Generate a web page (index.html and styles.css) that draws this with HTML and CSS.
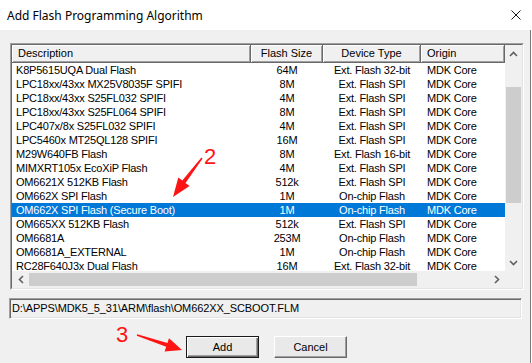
FILE: index.html
```html
<html>
<head>
<title>Add Flash Programming Algorithm</title>
<link rel="stylesheet" href="styles.css">
</head>
<body>
<div class="titlebar">
    <span class="title">Add Flash Programming Algorithm</span>
    <svg class="close" width="10" height="10" viewBox="0 0 10 10">
        <path d="M0.5 0.5 L9.5 9.5 M9.5 0.5 L0.5 9.5" stroke="#1a1a1a" stroke-width="1" fill="none"/>
    </svg>
</div>
<div class="client">
    <div class="listbox">
        <div class="listbox-inner">
            <div class="list">
                <div class="row head">
                    <div class="c1">Description</div>
                    <div class="c2">Flash Size</div>
                    <div class="c3">Device Type</div>
                    <div class="c4">Origin</div>
                </div>
                <div class="row"><div class="c1">K8P5615UQA Dual Flash</div><div class="c2">64M</div><div class="c3">Ext. Flash 32-bit</div><div class="c4">MDK Core</div></div>
                <div class="row"><div class="c1">LPC18xx/43xx MX25V8035F SPIFI</div><div class="c2">8M</div><div class="c3">Ext. Flash SPI</div><div class="c4">MDK Core</div></div>
                <div class="row"><div class="c1">LPC18xx/43xx S25FL032 SPIFI</div><div class="c2">4M</div><div class="c3">Ext. Flash SPI</div><div class="c4">MDK Core</div></div>
                <div class="row"><div class="c1">LPC18xx/43xx S25FL064 SPIFI</div><div class="c2">8M</div><div class="c3">Ext. Flash SPI</div><div class="c4">MDK Core</div></div>
                <div class="row"><div class="c1">LPC407x/8x S25FL032 SPIFI</div><div class="c2">4M</div><div class="c3">Ext. Flash SPI</div><div class="c4">MDK Core</div></div>
                <div class="row"><div class="c1">LPC5460x MT25QL128 SPIFI</div><div class="c2">16M</div><div class="c3">Ext. Flash SPI</div><div class="c4">MDK Core</div></div>
                <div class="row"><div class="c1">M29W640FB Flash</div><div class="c2">8M</div><div class="c3">Ext. Flash 16-bit</div><div class="c4">MDK Core</div></div>
                <div class="row"><div class="c1">MIMXRT105x EcoXiP Flash</div><div class="c2">4M</div><div class="c3">Ext. Flash SPI</div><div class="c4">MDK Core</div></div>
                <div class="row"><div class="c1">OM6621X 512KB Flash</div><div class="c2">512k</div><div class="c3">Ext. Flash SPI</div><div class="c4">MDK Core</div></div>
                <div class="row"><div class="c1">OM662X SPI Flash</div><div class="c2">1M</div><div class="c3">On-chip Flash</div><div class="c4">MDK Core</div></div>
                <div class="row sel"><div class="c1">OM662X SPI Flash (Secure Boot)</div><div class="c2">1M</div><div class="c3">On-chip Flash</div><div class="c4">MDK Core</div></div>
                <div class="row"><div class="c1">OM665XX 512KB Flash</div><div class="c2">512k</div><div class="c3">Ext. Flash SPI</div><div class="c4">MDK Core</div></div>
                <div class="row"><div class="c1">OM6681A</div><div class="c2">253M</div><div class="c3">On-chip Flash</div><div class="c4">MDK Core</div></div>
                <div class="row"><div class="c1">OM6681A_EXTERNAL</div><div class="c2">1M</div><div class="c3">On-chip Flash</div><div class="c4">MDK Core</div></div>
                <div class="row"><div class="c1">RC28F640J3x Dual Flash</div><div class="c2">16M</div><div class="c3">Ext. Flash 32-bit</div><div class="c4">MDK Core</div></div>
            </div>
            <div class="vscroll">
                <div class="sbtn"><svg width="9" height="6" viewBox="0 0 9 6"><path d="M1 5 L4.5 1.5 L8 5" stroke="#606060" stroke-width="1.6" fill="none"/></svg></div>
                <div class="vtrack"><div class="vthumb"></div></div>
                <div class="sbtn"><svg width="9" height="6" viewBox="0 0 9 6"><path d="M1 1 L4.5 4.5 L8 1" stroke="#606060" stroke-width="1.6" fill="none"/></svg></div>
            </div>
            <div class="hscroll">
                <div class="sbtn"><svg width="6" height="9" viewBox="0 0 6 9"><path d="M5 1 L1.5 4.5 L5 8" stroke="#606060" stroke-width="1.6" fill="none"/></svg></div>
                <div class="htrack"><div class="hthumb"></div></div>
                <div class="sbtn"><svg width="6" height="9" viewBox="0 0 6 9"><path d="M1 1 L4.5 4.5 L1 8" stroke="#606060" stroke-width="1.6" fill="none"/></svg></div>
            </div>
            <div class="corner"></div>
        </div>
    </div>
    <div class="pathbox">D:\APPS\MDK5_5_31\ARM\flash\OM662XX_SCBOOT.FLM</div>
    <div class="buttons">
        <div class="btn default">Add</div>
        <div class="btn">Cancel</div>
    </div>
</div>

<!-- red annotations drawn over the dialog -->
<span class="mark mark2">2</span>
<span class="mark mark3">3</span>
<svg class="arrows" width="532" height="363" viewBox="0 0 532 363">
    <polygon fill="#ff1414" points="202.6,158.4 201.4,157.6 182.3,180.5 178.3,177.5 173,197 189.5,185.9 185.5,182.9"/>
    <polygon fill="#ff1414" points="137.2,334.3 136.8,335.7 166.2,346.8 164.6,351.5 182,350 169,338.3 167.4,343"/>
</svg>
</body>
</html>
```

FILE: styles.css
```css
*
{
    margin: 0;
    padding: 0;
    box-sizing: border-box;
}
html, body
{
    width: 532px;
    height: 363px;
    overflow: hidden;
    background: #fff;
}
body
{
    position: relative;
    font-family: "Liberation Sans", Arial, sans-serif;
    font-size: 11px;
    color: #000;
}
.titlebar
{
    height: 30px;
    background: #fff;
    display: flex;
    align-items: center;
    padding-left: 7px;
}
.title
{
    font-family: "Noto Sans", "Open Sans", sans-serif;
    font-size: 12px;
    color: #000;
}
.close
{
    margin-left: auto;
    margin-right: 11px;
    margin-top: -1px;
}
.client
{
    width: 531px;
    height: 333px;
    background: #f0f0f0;
    border-right: 1px solid #7a7a7a;
    padding: 13px 0 0 9px;
    display: flex;
    flex-direction: column;
}
.listbox
{
    width: 514px;
    height: 247px;
    margin-left: 1px;
    border: 1px solid;
    border-color: #a0a0a0 #fff #fff #a0a0a0;
}
.listbox-inner
{
    height: 100%;
    border: 1px solid;
    border-color: #696969 #e3e3e3 #e3e3e3 #696969;
    display: grid;
    grid-template-columns: 493px 17px;
    grid-template-rows: 226px 17px;
    background: #fff;
}
.list
{
    overflow: hidden;
    background: #fff;
}
.row
{
    display: grid;
    grid-template-columns: 239px 72px 98px 84px;
    height: 14px;
    line-height: 14px;
    white-space: nowrap;
    letter-spacing: -0.2px;
}
.row div
{
    overflow: hidden;
}
.c1
{
    padding-left: 4px;
}
.c2, .c3
{
    text-align: center;
}
.c4
{
    padding-left: 6px;
}
.row.sel
{
    background: #0078d7;
    color: #fff;
}
.row.head
{
    height: 18px;
    line-height: 17px;
    letter-spacing: 0;
}
.row.head div
{
    background: #f0f0f0;
    border-right: 1px solid #696969;
    border-bottom: 1px solid #696969;
    box-shadow: inset 1px 1px #fff, inset -1px -1px #a0a0a0;
}
.row.head .c1
{
    padding-left: 6px;
}
.vscroll
{
    display: flex;
    flex-direction: column;
    background: #f0f0f0;
}
.sbtn
{
    width: 17px;
    height: 17px;
    flex: none;
    display: flex;
    align-items: center;
    justify-content: center;
}
.vtrack
{
    flex: 1;
    padding-top: 25px;
}
.vthumb
{
    width: 15px;
    height: 116px;
    margin-left: 1px;
    background: #cdcdcd;
}
.hscroll
{
    display: flex;
    background: #f0f0f0;
}
.htrack
{
    flex: 1;
    padding-top: 2px;
}
.hthumb
{
    width: 388px;
    height: 13px;
    background: #cdcdcd;
}
.corner
{
    background: #f0f0f0;
}
.pathbox
{
    width: 513px;
    height: 21px;
    margin-top: 8px;
    border: 1px solid;
    border-color: #a0a0a0 #fff #fff #a0a0a0;
    box-shadow: inset 1px 1px #696969, inset -1px -1px #e3e3e3;
    padding-left: 2px;
    line-height: 19px;
    white-space: nowrap;
    letter-spacing: -0.1px;
}
.buttons
{
    display: flex;
    gap: 15px;
    margin-top: 17px;
    padding-left: 177px;
}
.btn
{
    width: 73px;
    height: 22px;
    line-height: 20px;
    text-align: center;
    background: #e9e9e9;
    border: 1px solid;
    border-color: #fff #696969 #696969 #fff;
    box-shadow: inset -1px -1px #a0a0a0;
}
.btn.default
{
    border-color: #1a1a1a;
    box-shadow: inset 1px 1px #fff, inset -1px -1px #696969, inset -2px -2px #a0a0a0;
}
.mark
{
    position: absolute;
    font-family: "Liberation Sans", Arial, sans-serif;
    font-size: 22px;
    line-height: 22px;
    color: #ff1414;
}
.mark2
{
    left: 204px;
    top: 146px;
}
.mark3
{
    left: 116px;
    top: 324px;
}
.arrows
{
    position: absolute;
    left: 0;
    top: 0;
}
```
